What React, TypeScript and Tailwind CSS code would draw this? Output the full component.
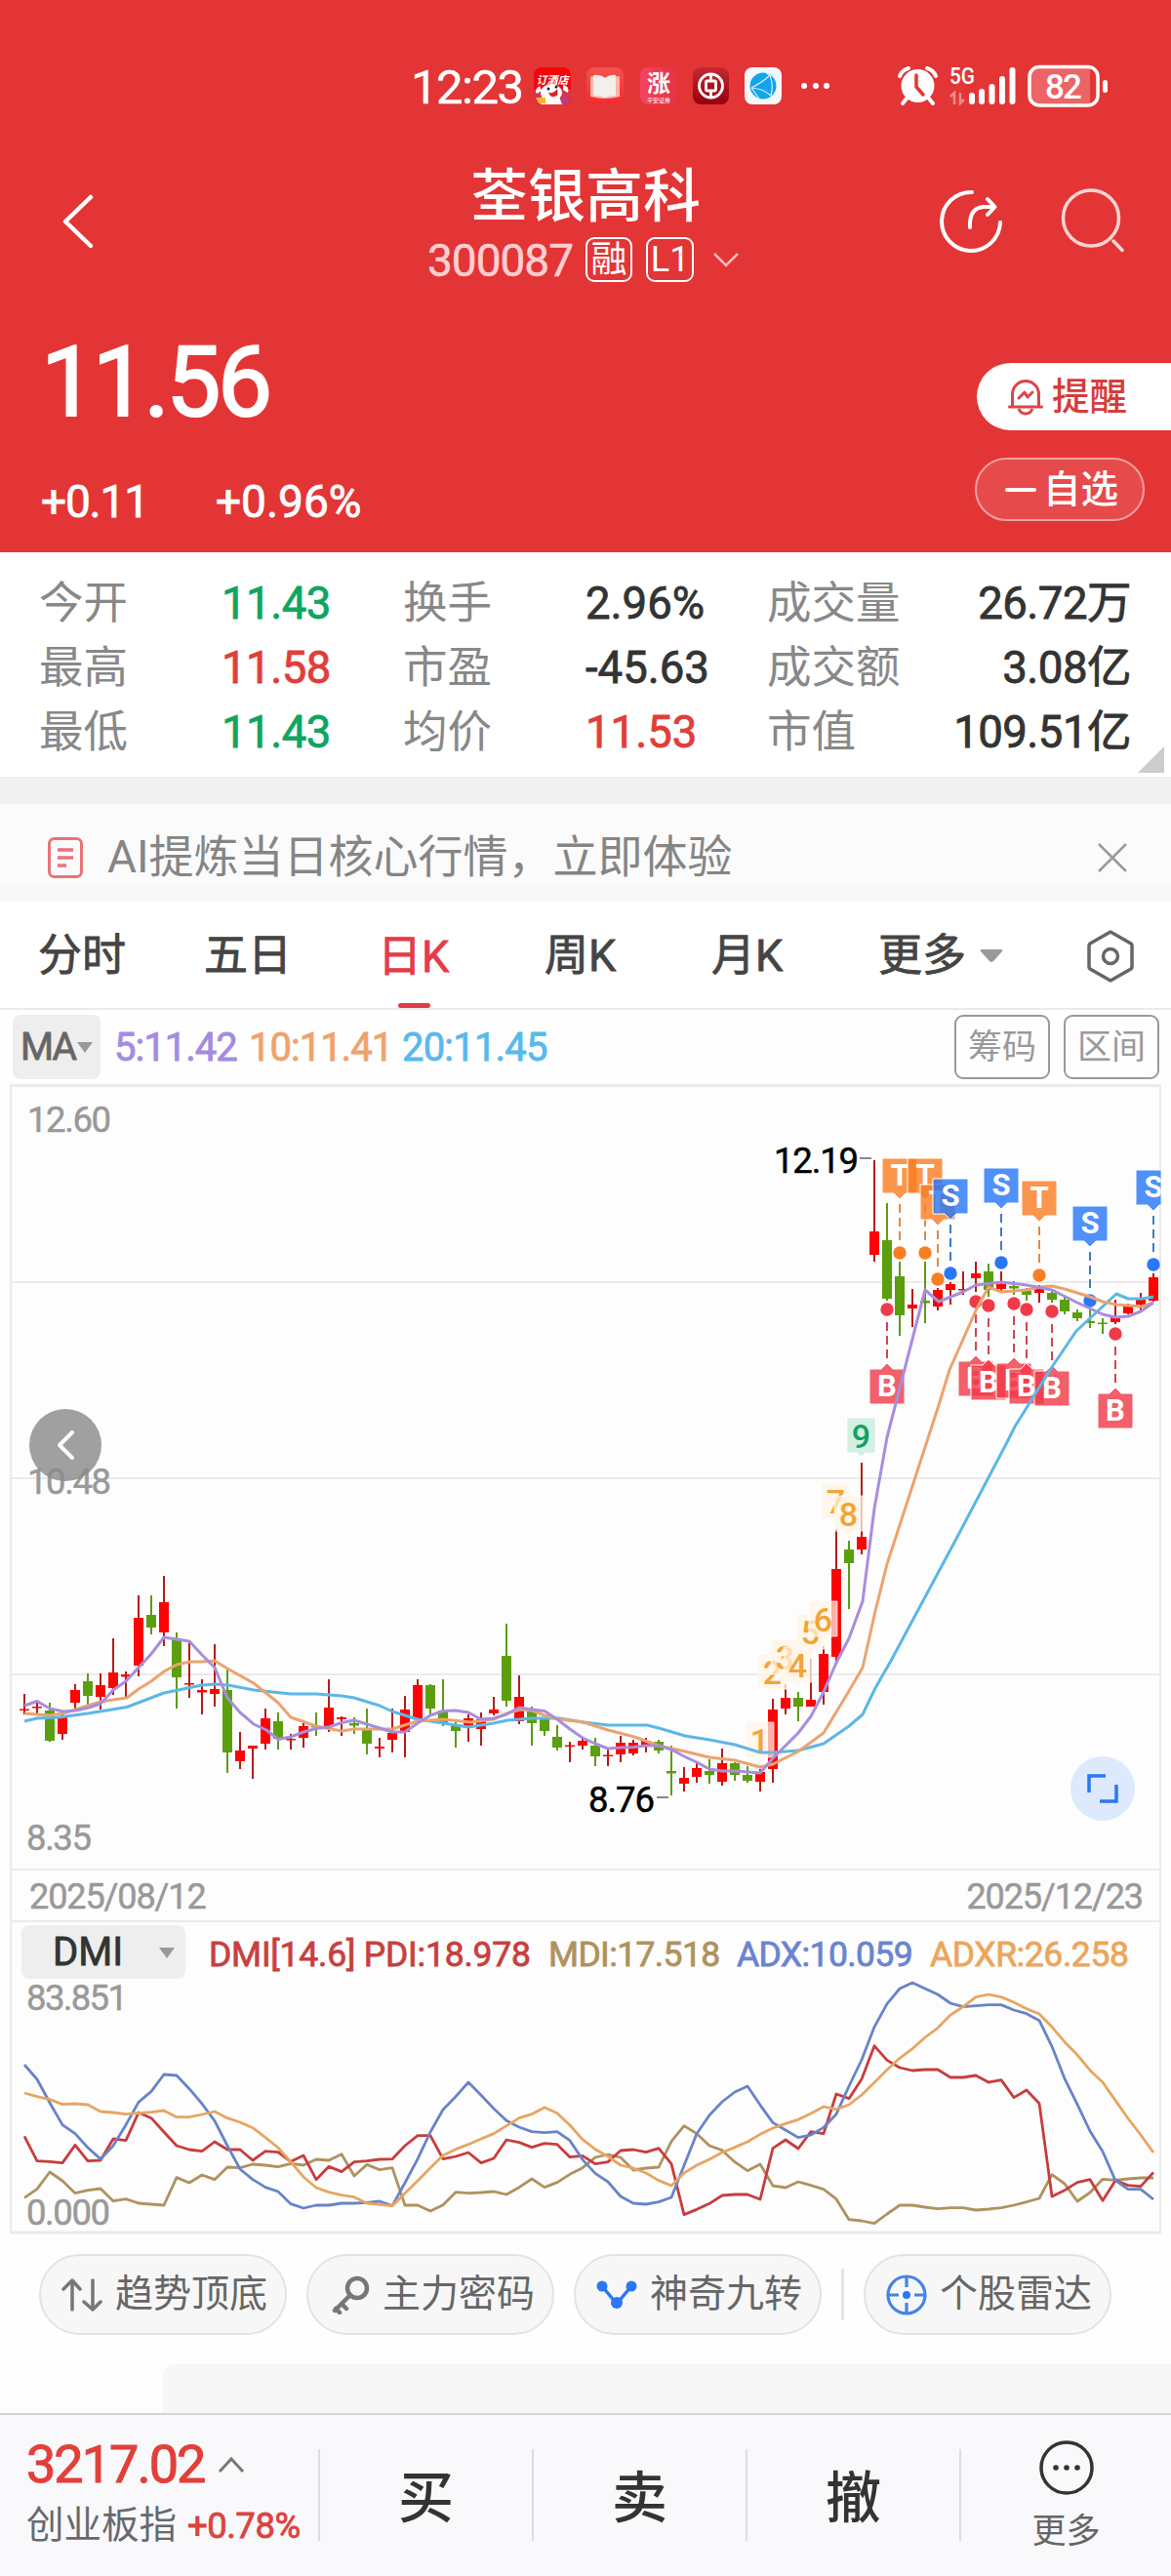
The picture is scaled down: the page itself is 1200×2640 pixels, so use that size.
import type { ReactNode } from "react";

type Candle = [up: 0 | 1, top: number, bottom: number, high: number, low: number];
type Point = [number, number];

const STEP = 13;
const x = (i: number) => 25 + STEP * i;

// 1 = up (red), 0 = down (green)
const candles: Candle[] = [
  [1, 1751.5, 1753, 1736, 1757], [1, 1749, 1750.5, 1744, 1757], [0, 1753, 1784, 1745, 1785],
  [1, 1759, 1777, 1755, 1783], [1, 1732, 1745, 1726, 1752], [0, 1723, 1738, 1715, 1747],
  [1, 1727, 1739, 1715, 1752], [1, 1714, 1730, 1679, 1737], [1, 1716, 1718.5, 1713, 1739],
  [1, 1658, 1707, 1635, 1718], [0, 1655, 1668, 1635, 1675], [1, 1642, 1673, 1615, 1687],
  [0, 1679, 1719, 1673, 1751], [1, 1725, 1726.5, 1683, 1740], [1, 1732, 1734.5, 1721, 1757],
  [1, 1731, 1736, 1685, 1749], [0, 1732, 1796, 1711, 1817], [1, 1794, 1805, 1775, 1813],
  [1, 1789, 1792, 1789, 1823], [1, 1761, 1787, 1751, 1793], [0, 1764, 1782, 1755, 1793],
  [1, 1782, 1783.5, 1777, 1793], [1, 1769, 1781, 1763, 1791], [0, 1769, 1770.5, 1755, 1779],
  [1, 1750, 1770, 1721, 1775], [1, 1760, 1762, 1759, 1779], [0, 1766, 1768.5, 1760, 1777],
  [0, 1773, 1787, 1751, 1798], [1, 1790, 1792, 1781, 1801], [1, 1776, 1783, 1751, 1796],
  [1, 1752, 1775, 1738, 1801], [1, 1727, 1762, 1721, 1764], [0, 1727, 1751, 1726, 1757],
  [0, 1753, 1765, 1721, 1769], [0, 1769, 1774, 1765, 1791], [1, 1761, 1769, 1757, 1785],
  [1, 1762, 1772, 1755, 1789], [1, 1752, 1756, 1739, 1758], [0, 1697, 1743, 1664, 1749],
  [1, 1739, 1764, 1717, 1767], [0, 1754, 1766, 1749, 1789], [0, 1762, 1774, 1760, 1779],
  [0, 1780, 1791, 1768, 1794], [1, 1788.5, 1790, 1785, 1806], [1, 1784, 1789, 1781, 1793],
  [0, 1789, 1800, 1781, 1810], [1, 1798.5, 1800, 1792, 1810], [1, 1786, 1798, 1779, 1806],
  [1, 1786, 1797, 1783, 1799], [1, 1784, 1789, 1781, 1796], [0, 1785, 1794, 1783, 1797],
  [0, 1815, 1817.5, 1789, 1840], [1, 1822, 1828, 1811, 1836], [1, 1812, 1821, 1807, 1827],
  [0, 1815, 1819, 1803, 1828], [1, 1807, 1826, 1792, 1830], [0, 1807, 1819, 1806, 1825],
  [0, 1819, 1825, 1810, 1827], [1, 1816, 1826, 1813, 1836], [1, 1752, 1813, 1741, 1827],
  [1, 1740, 1751, 1726, 1757], [0, 1740, 1749, 1734, 1764], [1, 1742, 1749, 1700, 1749],
  [1, 1695, 1734, 1687, 1747], [1, 1608, 1698, 1567, 1703], [0, 1588, 1602, 1579, 1649],
  [1, 1575, 1588, 1499, 1593], [1, 1262, 1286, 1189, 1293], [0, 1271, 1331, 1233, 1333],
  [0, 1308, 1348, 1293, 1369], [1, 1337, 1341, 1321, 1360], [0, 1333, 1335.5, 1293, 1356],
  [1, 1322, 1339, 1320, 1343], [1, 1316, 1322, 1314, 1337], [1, 1321, 1322.5, 1303, 1327],
  [1, 1305, 1310, 1293, 1324], [0, 1303, 1322, 1295, 1329], [1, 1316, 1321, 1303, 1323],
  [0, 1318, 1320.5, 1313, 1327], [0, 1323, 1327, 1320, 1333], [1, 1321, 1325, 1317, 1335],
  [0, 1325, 1332, 1323, 1335], [0, 1332, 1344, 1329, 1347], [0, 1345, 1351, 1342, 1354],
  [0, 1354, 1356, 1340, 1361], [0, 1355.5, 1357, 1351, 1367], [1, 1350, 1355, 1332, 1357],
  [1, 1339, 1346, 1336, 1347], [1, 1332, 1337, 1325, 1343], [1, 1309, 1333, 1305, 1334],
];

const ma5: Point[] = [
  [25, 1748], [38, 1743.5], [51, 1751], [65, 1754], [78, 1753], [91, 1750], [103, 1746], [116, 1732],
  [129, 1723], [142, 1709], [155, 1695], [168, 1678], [181, 1680], [194, 1682], [207, 1696], [220, 1709],
  [233, 1740], [246, 1755], [260, 1767], [273, 1773], [285, 1782.5], [298, 1780], [311, 1775], [324, 1771.5],
  [337, 1770], [350, 1765.5], [363, 1763], [376, 1767], [389, 1771], [402, 1775], [415, 1775], [428, 1766],
  [441, 1758], [454, 1753.5], [467, 1753], [480, 1755], [493, 1762], [506, 1761], [519, 1757], [532, 1750],
  [545, 1752], [558, 1753.5], [571, 1762], [584, 1772], [597, 1781], [610, 1787], [623, 1792], [636, 1791],
  [649, 1790.5], [662, 1789], [675, 1789], [688, 1793], [701, 1800], [714, 1806], [727, 1813], [740, 1815],
  [753, 1815], [766, 1816], [779, 1817], [792, 1802], [805, 1789], [818, 1776], [831, 1759], [844, 1734],
  [857, 1704], [870, 1679], [884, 1641], [896, 1546], [909, 1473], [948, 1322], [962, 1334], [987, 1324],
  [1000, 1317], [1026, 1314], [1052, 1317], [1078, 1322], [1104, 1335], [1130, 1347], [1143, 1350],
  [1156, 1349], [1169, 1344], [1182, 1335],
];

const ma10: Point[] = [
  [25, 1756], [51, 1758], [65, 1756], [90, 1748], [103, 1744], [116, 1742], [130, 1740], [142, 1731],
  [155, 1723], [168, 1713], [181, 1706], [195, 1703], [207, 1703], [220, 1702], [233, 1710], [260, 1725],
  [285, 1745], [298, 1760], [324, 1769], [350, 1774], [363, 1772], [402, 1772], [418, 1767], [428, 1764],
  [454, 1762], [482, 1765], [506, 1762], [519, 1756], [533, 1752], [545, 1753], [558, 1758], [573, 1762],
  [598, 1765], [623, 1773], [650, 1780], [675, 1789], [702, 1795], [727, 1801], [753, 1804], [779, 1811],
  [792, 1808], [818, 1795], [844, 1776], [870, 1733], [884, 1709], [897, 1651], [909, 1603], [962, 1440],
  [973, 1404], [1000, 1343], [1013, 1319], [1026, 1324], [1052, 1322], [1066, 1319], [1078, 1318],
  [1091, 1321], [1117, 1329], [1130, 1334], [1144, 1337], [1170, 1339], [1182, 1335],
];

const ma20: Point[] = [
  [25, 1764], [38, 1761], [60, 1760], [90, 1756], [130, 1749.5], [168, 1735], [207, 1727], [221, 1726],
  [234, 1727], [260, 1732], [298, 1736], [324, 1736], [350, 1738], [363, 1740], [389, 1748], [402, 1754],
  [428, 1762], [454, 1766], [480, 1770], [506, 1766], [520, 1763], [545, 1761], [573, 1761], [598, 1765],
  [623, 1768], [663, 1768], [675, 1771], [702, 1779], [727, 1783], [753, 1788], [779, 1796], [792, 1796],
  [818, 1794], [833, 1790], [844, 1787], [870, 1769], [884, 1757], [897, 1730], [913, 1702], [980, 1577],
  [1031, 1480], [1040, 1462], [1078, 1401], [1103, 1364], [1130, 1339], [1144, 1326], [1156, 1331],
  [1170, 1331], [1182, 1329],
];

// DMI series, one value per candle, measured down from the top in thirds of a pixel
const pdi = [
  868, 944, 946, 950, 895, 944, 942, 876, 881, 795, 812, 855, 897, 909, 914, 885, 909, 909, 942, 914, 917, 946,
  927, 1001, 961, 977, 947, 944, 939, 938, 897, 866, 866, 938, 930, 918, 950, 936, 879, 887, 902, 890, 893, 932,
  928, 953, 947, 912, 909, 917, 905, 953, 1109, 1093, 1075, 1050, 1047, 1047, 1062, 905, 879, 906, 854, 860, 738,
  752, 692, 590, 634, 657, 666, 663, 663, 687, 687, 681, 702, 695, 749, 726, 767, 1053, 1034, 1010, 1001, 1066,
  1004, 1019, 1022, 979,
];
const mdi = [
  1057, 1030, 978, 1005, 1043, 1034, 1029, 1067, 1061, 1074, 1077, 1080, 995, 1011, 987, 1001, 963, 965, 954,
  957, 962, 952, 957, 939, 942, 923, 990, 955, 971, 965, 1080, 1080, 1098, 1079, 1040, 1043, 1041, 1038, 1047,
  1025, 999, 1025, 1010, 985, 965, 933, 924, 933, 972, 966, 963, 884, 836, 860, 897, 911, 947, 974, 954, 1020,
  1026, 1008, 1019, 1031, 1061, 1124, 1128, 1136, 1107, 1080, 1080, 1086, 1091, 1088, 1088, 1095, 1092, 1088,
  1080, 1070, 1059, 986, 1014, 1068, 1041, 1000, 1003, 999, 996, 996,
];
const adx = [
  648, 693, 765, 833, 860, 903, 938, 897, 833, 763, 730, 678, 681, 722, 768, 821, 897, 969, 1001, 1025, 1038,
  1076, 1089, 1080, 1080, 1074, 1074, 1072, 1068, 1082, 1011, 938, 855, 786, 746, 702, 742, 783, 820, 840, 854,
  857, 854, 881, 940, 982, 1008, 1053, 1074, 1077, 1070, 1056, 958, 860, 803, 762, 732, 714, 772, 826, 849, 872,
  864, 841, 800, 714, 633, 532, 461, 414, 396, 414, 432, 459, 470, 467, 464, 464, 480, 491, 512, 592, 691, 770,
  852, 915, 1004, 1031, 1031, 1062,
];
const adxr = [
  735, 746, 755, 770, 768, 771, 792, 795, 800, 797, 794, 789, 809, 809, 801, 792, 812, 825, 842, 872, 903, 947,
  993, 1026, 1040, 1049, 1055, 1074, 1078, 1082, 1043, 1005, 965, 927, 908, 893, 876, 860, 836, 812, 800, 779,
  797, 834, 878, 908, 930, 957, 966, 981, 1004, 1020, 981, 957, 939, 918, 902, 885, 862, 843, 829, 817, 798, 777,
  785, 771, 741, 703, 664, 628, 599, 564, 535, 495, 470, 440, 432, 440, 456, 476, 492, 532, 578, 618, 665, 702,
  758, 813, 864, 918,
];

const trades: { i: number; kind: "T" | "S" | "B"; dot: number }[] = [
  { i: 69, kind: "T", dot: 1284 },
  { i: 71, kind: "T", dot: 1284 },
  { i: 72, kind: "T", dot: 1311 },
  { i: 73, kind: "S", dot: 1305 },
  { i: 77, kind: "S", dot: 1294 },
  { i: 80, kind: "T", dot: 1307 },
  { i: 84, kind: "S", dot: 1333 },
  { i: 89, kind: "S", dot: 1296 },
  { i: 68, kind: "B", dot: 1342 },
  { i: 75, kind: "B", dot: 1334 },
  { i: 76, kind: "B", dot: 1338 },
  { i: 78, kind: "B", dot: 1336 },
  { i: 79, kind: "B", dot: 1342 },
  { i: 81, kind: "B", dot: 1344 },
  { i: 86, kind: "B", dot: 1367 },
];

const tradeColors = {
  T: { fill: "#fa7e22", line: "#e08a45" },
  S: { fill: "#2877f8", line: "#3f7dbd" },
  B: { fill: "#f03a48", line: "#cf4655" },
};

const nineTurn = [1765, 1695, 1680, 1688, 1654, 1641, 1520, 1533, 1453];

const stats = [
  ["今开", "11.43", "text-[#0fa55e]", "换手", "2.96%", "text-[#333]", "成交量", "26.72万"],
  ["最高", "11.58", "text-[#e03e3a]", "市盈", "-45.63", "text-[#333]", "成交额", "3.08亿"],
  ["最低", "11.43", "text-[#0fa55e]", "均价", "11.53", "text-[#e03e3a]", "市值", "109.51亿"],
];

const toPoints = (pts: Point[]) => pts.map((p) => p.join(",")).join(" ");
const dmiPoints = (values: number[]) => values.map((v, i) => `${x(i)},${1900 + v / 3}`).join(" ");

function TradeMark({ i, kind, dot }: (typeof trades)[number]) {
  const { fill, line } = tradeColors[kind];
  const cx = x(i);
  const below = kind === "B";
  const top = below ? dot + 61 : dot - 97;
  const box = below
    ? `M${cx - 18} ${top}h12l6 -6l6 6h12v36h-36z`
    : `M${cx - 18} ${top}h36v36h-12l-6 6l-6 -6h-12z`;
  return (
    <g>
      <line
        x1={cx}
        x2={cx}
        y1={below ? dot + 13 : top + 47}
        y2={below ? dot + 51 : dot - 9}
        stroke={line}
        strokeWidth="2"
        strokeDasharray="9 5"
      />
      <circle cx={cx} cy={dot} r="6.7" fill={fill} />
      <path d={box} fill={fill} fillOpacity=".81" stroke="#fff" strokeWidth="1" strokeLinejoin="round" />
      <text x={cx} y={top + 28} textAnchor="middle" fontSize="31" fontWeight="700" fill="#fff">
        {kind}
      </text>
    </g>
  );
}

function NineTurnMark({ n, top }: { n: number; top: number }) {
  const left = x(57 + n) - 15;
  const last = n === 9;
  return (
    <g>
      <path
        d={`M${left} ${top}h29v36h-10l-4.500 4l-4.500 -4h-10z`}
        fill={last ? "#d3f0e2" : "#fff2e4"}
        fillOpacity={last ? 1 : 0.72}
        stroke="#fff"
        strokeOpacity=".7"
      />
      <text
        x={left + 14.5}
        y={top + 31}
        textAnchor="middle"
        fontSize="34"
        fontWeight="500"
        fill={last ? "#12a165" : "#f0a535"}
      >
        {n}
      </text>
    </g>
  );
}

function KLineChart() {
  return (
    <svg viewBox="0 1110 1200 807" className="block h-[807px] w-full">
      <clipPath id="plot">
        <rect x="11" y="1110" width="1178.500" height="807" />
      </clipPath>
      <rect x="11" y="1111" width="1178" height="806" fill="#fdfdfd" />
      <g stroke="#ebebeb" strokeWidth="2">
        <path d="M10 1112.500h1180" strokeWidth="3" />
        <path d="M11 1111v806M1189 1111v806" />
        <path d="M11 1314h1178M11 1515h1178M11 1716h1178M11 1916h1178" />
      </g>
      <g fontSize="36.500" fill="#999" stroke="#999" strokeWidth=".5">
        <text x="28" y="1160" textLength="86">12.60</text>
        <text x="28" y="1531" textLength="86">10.48</text>
        <text x="27" y="1896" textLength="67">8.35</text>
      </g>
      <g clipPath="url(#plot)">
        {candles.map(([up, top, bottom, high, low], i) => (
          <g key={i}>
            <rect x={x(i) - 1} y={high} width="2" height={low - high} fill={up ? "#b31d1d" : "#5c9b17"} />
            <rect x={x(i) - 5} y={top} width="10" height={bottom - top} fill={up ? "#fd0404" : "#5c9f0e"} />
          </g>
        ))}
        {trades.map((t) => (
          <TradeMark key={t.kind + t.i} {...t} />
        ))}
        {nineTurn.map((top, n) => (
          <NineTurnMark key={n} n={n + 1} top={top} />
        ))}
        <g fill="none" strokeWidth="3" strokeLinejoin="round">
          <polyline points={toPoints(ma20)} stroke="#5cb7e6" />
          <polyline points={toPoints(ma10)} stroke="#eba370" />
          <polyline points={toPoints(ma5)} stroke="#a78edd" />
        </g>
      </g>
      <g fontSize="36.500" fill="#000">
        <text x="793" y="1202" textLength="87" stroke="#000" strokeWidth=".5">12.19</text>
        <text x="603" y="1857" textLength="68" stroke="#000" strokeWidth=".5">8.76</text>
        <path d="M881 1187h12M673 1842h12" stroke="#888" strokeWidth="2" />
      </g>
    </svg>
  );
}

function DmiChart() {
  return (
    <svg viewBox="0 2030 1200 260" className="block h-[260px] w-full overflow-visible">
      <rect x="11" y="2030" width="1178" height="256" fill="#fdfdfd" />
      <path d="M11 2030v258M1189 2030v258" stroke="#ebebeb" strokeWidth="2" />
      <path d="M10 2288h1180" stroke="#e9e9e9" strokeWidth="3" />
      <g fill="none" strokeWidth="2.800" strokeLinejoin="round">
        <polyline points={dmiPoints(mdi)} stroke="#ae925f" />
        <polyline points={dmiPoints(pdi)} stroke="#c93c3c" />
        <polyline points={dmiPoints(adx)} stroke="#6983c9" />
        <polyline points={dmiPoints(adxr)} stroke="#e7a561" />
      </g>
      <g fontSize="36.500" fill="#999" stroke="#999" strokeWidth=".5">
        <text x="27" y="2060" textLength="104">83.851</text>
        <text x="27" y="2280" textLength="86">0.000</text>
      </g>
    </svg>
  );
}

function StatusBar() {
  return (
    <div className="flex h-[114px] items-start pt-[62px]">
      <div className="ml-[421px] w-[126px] text-[49px] leading-[56px] tracking-[-1.500px] [-webkit-text-stroke:0.5px]">12:23</div>
      <svg viewBox="547 62 310 52" className="h-[52px] w-[310px]">
        <defs>
          <linearGradient id="book" x2="0" y2="1">
            <stop stopColor="#f4544e" />
            <stop offset="1" stopColor="#f62a2e" />
          </linearGradient>
          <linearGradient id="broker">
            <stop stopColor="#f2455f" />
            <stop offset="1" stopColor="#e83247" />
          </linearGradient>
          <linearGradient id="bank" x2="0" y2="1">
            <stop stopColor="#c42a33" />
            <stop offset="1" stopColor="#96000f" />
          </linearGradient>
        </defs>
        {/* travel app */}
        <rect x="547" y="69" width="38" height="38" rx="8" fill="#f40608" />
        <path d="M547 92h38v7a8 8 0 0 1-8 8h-22a8 8 0 0 1-8-8z" fill="#d9344f" />
        <text x="566" y="86" textAnchor="middle" fontSize="11" fontWeight="700" fontStyle="italic" fill="#fff">订酒店</text>
        <ellipse cx="565" cy="95" rx="11" ry="9" fill="#fff" />
        <path d="M556 99h17l3 8h-22z" fill="#fff" />
        <path d="M553 88q-6 4-3 8l5-3zM577 87q7 1 5 8l-5-3z" fill="#fff" />
        <circle cx="562" cy="91" r="1.500" fill="#222" />
        <circle cx="570" cy="89" r="1.500" fill="#222" />
        <path d="M562 95q6 1 9-4q2 7-3 8q-4 1-6-4z" fill="#d22" />
        <path d="M549 100h10v6h-7z" fill="#f9b52c" />
        <path d="M576 99l6 4-4 3z" fill="#8a4ad0" />
        {/* reader app */}
        <rect x="601" y="69" width="38" height="38" rx="8" fill="url(#book)" />
        <path d="M605 79q0-1 4-1q6-1 11 2q5-3 11-2q4 0 4 1v20q-8 2-15 2t-15-2z" fill="#fab6ac" />
        <path d="M608 77q7-1 12 3q5-4 11-3v21q-6 0-11 2q-5-2-12-2z" fill="#f3efec" />
        {/* broker app */}
        <rect x="656" y="69" width="37" height="38" rx="8" fill="url(#broker)" />
        <text x="675" y="94" textAnchor="middle" fontSize="24" fontWeight="700" fill="#fff">涨</text>
        <text x="675" y="105" textAnchor="middle" fontSize="6" fill="#fff">平安证券</text>
        {/* bank app */}
        <rect x="710" y="69" width="37" height="38" rx="8" fill="url(#bank)" />
        <g fill="none" stroke="#fff" strokeWidth="2.800">
          <circle cx="728.500" cy="88" r="12" />
          <rect x="723.500" y="83" width="10" height="10" rx="1" />
          <path d="M728.500 76v7M728.500 93v7" />
        </g>
        {/* network app */}
        <rect x="763" y="69" width="38" height="38" rx="8" fill="#f5f8fa" />
        <circle cx="782" cy="88" r="13.500" fill="#12a5ea" />
        <g stroke="#d5f1fd" strokeWidth="1.200" fill="none">
          <path d="M770 90Q782 84 789 77M770 90Q783 91 790 98M789 77Q793 88 790 98M789 77L785 75M770 90l8 11" />
        </g>
        <g fill="#fff">
          <circle cx="824" cy="88" r="3" />
          <circle cx="836" cy="88" r="3" />
          <circle cx="847" cy="88" r="3" />
        </g>
      </svg>
      <svg viewBox="857 62 343 52" className="h-[52px] w-[343px]">
        {/* alarm */}
        <circle cx="940.500" cy="88" r="17" fill="#fff" />
        <path d="M922 78q2-6 9-8M959 78q-2-6-9-8M929 101l-4 5M952 101l4 5" stroke="#fff" strokeWidth="4" strokeLinecap="round" />
        <path d="M939 77v12l7 8" stroke="#e33536" strokeWidth="3.500" fill="none" strokeLinecap="round" />
        <text x="973" y="86" fontSize="23" fontWeight="500" fill="#fff" textLength="26" lengthAdjust="spacingAndGlyphs">5G</text>
        <path d="M974 99l4-4v12M988 102l-4 4V95" stroke="#f08a8b" strokeWidth="2.500" fill="none" />
        <g fill="#fff">
          <rect x="993" y="95" width="6" height="12" rx="3" />
          <rect x="1003" y="91" width="6" height="16" rx="3" />
          <rect x="1013.500" y="86" width="6" height="21" rx="3" />
          <rect x="1024" y="78" width="6" height="29" rx="3" />
          <rect x="1034.500" y="69" width="6" height="38" rx="3" />
          <rect x="1130" y="82" width="5" height="13" rx="2.500" />
        </g>
        <path d="M1063 69h54v38h-54a8 8 0 0 1-8-8v-22a8 8 0 0 1 8-8z" fill="#ec6465" />
        <rect x="1055" y="68.500" width="70" height="39.500" rx="10" fill="none" stroke="#fff" strokeWidth="3.500" />
        <text x="1090" y="101" textAnchor="middle" fontSize="35" fontWeight="500" fill="#fff" textLength="38">82</text>
      </svg>
    </div>
  );
}

function Header() {
  return (
    <header className="h-[566px] bg-[#e33536] text-white">
      <StatusBar />
      <div className="flex h-[186px] items-start">
        <svg viewBox="0 190 420 74" className="mt-[76px] h-[74px] w-[420px]" fill="none" stroke="#fff">
          <path d="M93 202L67 227l26 25" strokeWidth="4.500" strokeLinecap="round" strokeLinejoin="round" />
        </svg>
        <div className="flex w-[360px] flex-col items-center pt-[58px]">
          <h1 className="text-[59px] leading-[60px] font-medium">荃银高科</h1>
          <div className="mt-[10px] -ml-1 flex items-center">
            <span className="mr-[13px] pt-0.5 text-[46px] leading-[46px] tracking-[-1px] text-[#ffcfd0] [-webkit-text-stroke:0.5px]">300087</span>
            <span className="mr-[14px] flex h-[46px] w-[48px] items-center justify-center rounded-[9px] border-2 border-white text-[37px] leading-none">
              融
            </span>
            <span className="mr-[19px] flex h-[46px] w-[49px] items-center justify-center rounded-[9px] border-2 border-white text-[36px] leading-none">
              L1
            </span>
            <svg viewBox="0 0 28 16" className="h-4 w-7" fill="none" stroke="#ffb9ba" strokeWidth="2.500">
              <path d="M2 2l12 12L26 2" />
            </svg>
          </div>
        </div>
        <svg viewBox="780 190 420 74" className="mt-[76px] h-[74px] w-[420px]" fill="none" strokeLinecap="round">
          <g stroke="#fff" strokeWidth="4" strokeLinejoin="round">
            <path d="M996 197A30 30 0 1 0 1025 228" />
            <path d="M994 233Q993 213 1008 212H1018M1012 204l7.500 8-7.500 8" />
          </g>
          <g stroke="#ffd3d3" strokeWidth="3.500">
            <circle cx="1118" cy="223.500" r="28.500" />
            <path d="M1141 247l9 9.500" />
          </g>
        </svg>
      </div>
      <div className="flex justify-between">
        <div className="pl-[42px]">
          <div className="mt-[42px] text-[100px] leading-[100px] tracking-[-3.500px] [-webkit-text-stroke:2px]">11.56</div>
          <div className="mt-[49px] flex text-[46px] leading-[46px] [-webkit-text-stroke:0.8px]">
            <span className="w-[179px] tracking-[-1.200px]">+0.11</span>
            <span>+0.96%</span>
          </div>
        </div>
        <div className="flex flex-col items-end pt-[72px]">
          <div className="flex h-[69px] w-[199px] items-center rounded-l-full bg-white pl-8 text-[38.500px] text-[#d53c3c]">
            <svg viewBox="0 0 36 38" className="mr-[9px] h-[38px] w-9" fill="none" stroke="#dc4448" strokeWidth="3">
              <path d="M1.500 29h33M4.500 29V16a13.500 13.500 0 0 1 27 0v13" strokeLinecap="round" />
              <path d="M11 31q2 5 7 5t7-5" />
              <path d="M11 20l6-6 3 5 5-5" strokeLinecap="round" strokeLinejoin="round" />
            </svg>
            <span className="font-medium">提醒</span>
          </div>
          <div className="mt-7 mr-[27px] flex h-[65px] w-[174px] items-center rounded-full border-2 border-[#f0a0a0] bg-[#e64a4b] pl-[29px] text-[38.500px] font-medium">
            <span className="mr-[7px] h-1 w-8 rounded-full bg-white" />
            自选
          </div>
        </div>
      </div>
    </header>
  );
}

function Stats() {
  return (
    <section className="flex h-[232px] border-b-2 border-[#eee] bg-white pt-[20px]">
      <div className="w-[1166px]">
        {stats.map(([a, av, ac, b, bv, bc, c, cv]) => (
          <div key={a} className="flex h-[66px] items-center pl-[40px] text-[45.500px] text-[#333]">
            <span className="w-[187px] text-[#888]">{a}</span>
            <span className={`w-[186px] tracking-[-0.500px] [-webkit-text-stroke:0.8px] ${ac}`}>{av}</span>
            <span className="w-[187px] text-[#888]">{b}</span>
            <span className={`w-[186px] [-webkit-text-stroke:0.8px] ${bc}`}>{bv}</span>
            <span className="text-[#888]">{c}</span>
            <span className="ml-auto pr-[7px] tracking-[-0.500px] [-webkit-text-stroke:0.8px]">{cv}</span>
          </div>
        ))}
      </div>
      <svg viewBox="0 0 27 27" className="mt-auto mb-1 h-[27px] w-[27px]">
        <path d="M27 0v27H0z" fill="#ccc" />
      </svg>
    </section>
  );
}

function AiBanner() {
  return (
    <section className="h-[126px] border-t-[26px] border-[#f1f1f1] bg-[#fbfbfb]">
      <div className="flex h-[83px] items-center pt-[26px] pl-[49px] text-[46px] text-[#858585]">
        <svg viewBox="0 0 36 42" className="mr-[25px] h-[42px] w-9" fill="none" stroke="#e87379" strokeWidth="3">
          <rect x="1.500" y="1.500" width="33" height="39" rx="5" />
          <path d="M10 13h16M10 21h16M10 29h9" strokeWidth="3.500" />
        </svg>
        AI提炼当日核心行情，立即体验
        <svg viewBox="0 0 30 30" className="mr-[45px] ml-auto h-[30px] w-[30px]" stroke="#999" strokeWidth="2.500">
          <path d="M1 1l28 28M29 1L1 29" />
        </svg>
      </div>
      <div className="h-[17px] bg-[#f8f8f8]" />
    </section>
  );
}

function PeriodTabs() {
  return (
    <nav className="flex h-[111px] items-center border-b-2 border-[#ebebeb] bg-white pt-0.5 pl-[39px] text-[45px] text-[#444] [-webkit-text-stroke:0.8px]">
      <span className="w-[170px]">分时</span>
      <span className="w-[182px]">五日</span>
      <span className="flex h-full w-[167px] flex-col justify-between text-[#e43c48]">
        <span className="-ml-1 pt-[21px]">日K</span>
        <i className="ml-[17px] h-[5px] w-[33px] rounded-full bg-[#e03c45]" />
      </span>
      <span className="w-[171px]">周K</span>
      <span className="w-[171px]">月K</span>
      <span>更多</span>
      <svg viewBox="0 0 24 15" className="ml-[14px] h-[15px] w-6">
        <path d="M2 1h20q2 0 1 2L14 13q-2 2-4 0L1 3Q0 1 2 1z" fill="#999" />
      </svg>
      <svg viewBox="0 0 48 54" className="ml-[86px] h-[54px] w-12" fill="none" stroke="#666" strokeWidth="3.500">
        <path d="M24 2l21 12q1 1 1 2v22q0 1-1 2L24 52 3 40q-1-1-1-2V16q0-1 1-2z" strokeLinejoin="round" />
        <circle cx="24" cy="27" r="7.500" />
      </svg>
    </nav>
  );
}

function MaBar() {
  return (
    <div className="flex h-[75px] items-start bg-[#fefefe] pt-[5px] text-[40px] leading-[68px]">
      <div className="ml-[13px] flex h-[66px] w-[90px] items-center rounded-lg bg-[#eee] pl-2 text-[39px] tracking-[-2px] text-[#666] [-webkit-text-stroke:0.8px]">
        MA
        <svg viewBox="0 0 16 11" className="ml-0.5 h-[11px] w-4">
          <path d="M0 0h16L8 11z" fill="#999" />
        </svg>
      </div>
      <span className="ml-[14px] w-[138px] tracking-[-1px] text-[#a48be2] [-webkit-text-stroke:0.8px]">5:11.42</span>
      <span className="w-[157px] tracking-[-1px] text-[#f0a269] [-webkit-text-stroke:0.8px]">10:11.41</span>
      <span className="tracking-[-0.800px] text-[#58b9ec] [-webkit-text-stroke:0.8px]">20:11.45</span>
      <div className="mr-[12px] ml-auto flex gap-[14px] text-[35px] leading-[64px] text-[#999]">
        <span className="h-[66px] w-[98px] rounded-[9px] border-2 border-[#999] text-center">筹码</span>
        <span className="h-[66px] w-[98px] rounded-[9px] border-2 border-[#999] text-center">区间</span>
      </div>
    </div>
  );
}

function Chip({ icon, children }: { icon: ReactNode; children: ReactNode }) {
  return (
    <div className="flex h-[83px] w-[254px] items-center justify-between rounded-full border-2 border-[#e3e3e3] bg-[#f7f7f7] pr-[18px] pl-[21px] text-[39px] text-[#666]">
      {icon}
      <span>{children}</span>
    </div>
  );
}

function ToolChips() {
  return (
    <div className="flex h-[183px] flex-col justify-between bg-[#fefefe] pt-5">
      <div className="flex h-[83px] items-center gap-5 pl-10">
        <Chip
          icon={
            <svg viewBox="0 0 42 36" className="h-9 w-[42px]" fill="none" stroke="#777" strokeWidth="3.500" strokeLinecap="round" strokeLinejoin="round">
              <path d="M11 33V3M2 12l9-9 8 9M32 3v30M23 25l9 8 8-8" />
            </svg>
          }
        >
          趋势顶底
        </Chip>
        <Chip
          icon={
            <svg viewBox="0 0 42 40" className="h-10 w-[42px]" fill="none" stroke="#777" strokeWidth="4.500" strokeLinecap="round">
              <circle cx="29" cy="13" r="10" />
              <path d="M22 20L6 36M13 29l5 5M7 34l4 4" />
            </svg>
          }
        >
          主力密码
        </Chip>
        <Chip
          icon={
            <svg viewBox="0 0 42 30" className="h-[30px] w-[42px]">
              <path d="M6 6l15 18L36 6" fill="none" stroke="#2b78f5" strokeWidth="3.500" />
              <circle cx="6" cy="6" r="5.500" fill="#2b78f5" />
              <circle cx="36" cy="6" r="5.500" fill="#2b78f5" />
              <circle cx="21" cy="23" r="6" fill="#2b78f5" />
            </svg>
          }
        >
          神奇九转
        </Chip>
        <span className="h-[53px] w-[3px] bg-[#e3e3e3]" />
        <Chip
          icon={
            <svg viewBox="0 0 42 42" className="h-[42px] w-[42px]" fill="none" stroke="#4484e6" strokeWidth="3.200">
              <circle cx="21" cy="21" r="19" />
              <path d="M21 2v11M21 29v11M2 21h11M29 21h11" />
              <circle cx="21" cy="21" r="4" fill="#2b78f5" stroke="none" />
            </svg>
          }
        >
          个股雷达
        </Chip>
      </div>
      <div className="ml-[167px] h-[50px] rounded-tl-xl bg-[#f7f7f7]" />
    </div>
  );
}

function TradeBar() {
  return (
    <footer className="flex h-[167px] border-t-2 border-[#d3d4d8] bg-[#f9f9fb] text-[#333]">
      <div className="w-[326px] pt-[23px] pl-[27px]">
        <div className="flex items-center text-[54px] leading-[56px] tracking-[-2px] text-[#e23f3b] [-webkit-text-stroke:1px]">
          3217.02
          <svg viewBox="0 0 28 18" className="ml-[14px] h-[18px] w-7" fill="none" stroke="#777" strokeWidth="3">
            <path d="M2 16L14 3l12 13" />
          </svg>
        </div>
        <div className="mt-[9px] flex items-center leading-[48px] whitespace-nowrap">
          <span className="text-[38.500px] text-[#666970]">创业板指</span>
          <span className="ml-[11px] pt-0.5 text-[36.500px] tracking-[-0.500px] text-[#dc433f] [-webkit-text-stroke:0.8px]">+0.78%</span>
        </div>
      </div>
      {["买", "卖", "撤"].map((label) => (
        <div
          key={label}
          className="mt-[35px] flex h-[94px] w-[219px] items-center justify-center border-l-2 border-[#dcdde0] pt-2 text-[57px] font-medium"
        >
          {label}
        </div>
      ))}
      <div className="mt-[35px] h-[94px] flex-1 border-l-2 border-[#dcdde0]">
        <div className="-mt-[9px] flex flex-col items-center text-[35px] leading-[40px] text-[#666]">
          <svg viewBox="0 0 56 56" className="h-14 w-14" fill="#333">
            <circle cx="28" cy="28" r="26" fill="none" stroke="#333" strokeWidth="3.500" />
            <circle cx="17" cy="28" r="2.800" />
            <circle cx="28" cy="28" r="2.800" />
            <circle cx="39" cy="28" r="2.800" />
          </svg>
          <span className="mt-[18px]">更多</span>
        </div>
      </div>
    </footer>
  );
}

export default function App() {
  return (
    <div className="h-[2640px] w-[1200px] overflow-hidden bg-[#fefefe] font-[Roboto,'Noto_Sans_CJK_SC',sans-serif]">
      <Header />
      <Stats />
      <AiBanner />
      <PeriodTabs />
      <MaBar />
      <div className="relative">
        <KLineChart />
        <span className="absolute top-[334px] left-[30px] flex h-[74px] w-[74px] items-center justify-center rounded-full bg-[#888]/80">
          <svg viewBox="0 0 20 32" className="h-8 w-5" fill="none" stroke="#fff" strokeWidth="4" strokeLinecap="round" strokeLinejoin="round">
            <path d="M17 3L4 16l13 13" />
          </svg>
        </span>
        <span className="absolute top-[690px] left-[1097px] flex h-[66px] w-[66px] items-center justify-center rounded-full bg-[#dde9fd]">
          <svg viewBox="0 0 32 32" className="h-8 w-8" fill="none" stroke="#2b78f5" strokeWidth="3.500">
            <path d="M2 20V3h17M13 29h17V12" />
          </svg>
        </span>
      </div>
      <div className="mx-[10px] flex h-[53px] items-center justify-between border-x-2 border-b-2 border-[#ebebeb] bg-[#fdfdfd] pt-0.5 pr-[17px] pl-[18px] text-[36px] tracking-[-1.100px] text-[#999] [-webkit-text-stroke:0.5px]">
        <span>2025/08/12</span>
        <span>2025/12/23</span>
      </div>
      <div className="mx-[10px] flex h-[60px] items-center border-x-2 border-[#ebebeb] bg-[#fdfdfd] text-[35.500px] [-webkit-text-stroke:0.8px]">
        <div className="ml-[10px] flex h-[55px] w-[168px] items-center rounded-lg bg-[#eee] pt-0.5 pl-[32px] text-[40px] text-[#333]">
          DMI
          <svg viewBox="0 0 16 11" className="mr-[11px] ml-auto h-[11px] w-4">
            <path d="M0 0h16L8 11z" fill="#999" />
          </svg>
        </div>
        <span className="ml-[24px] w-[348px] pt-[7px] tracking-[-0.200px] text-[#c83f3f]">DMI[14.6] PDI:18.978</span>
        <span className="w-[193px] pt-[7px] tracking-[-0.600px] text-[#ae925f]">MDI:17.518</span>
        <span className="w-[198px] pt-[7px] tracking-[-0.600px] text-[#6a84cf]">ADX:10.059</span>
        <span className="pt-[7px] tracking-[-0.400px] text-[#eba65c]">ADXR:26.258</span>
      </div>
      <DmiChart />
      <ToolChips />
      <TradeBar />
    </div>
  );
}
